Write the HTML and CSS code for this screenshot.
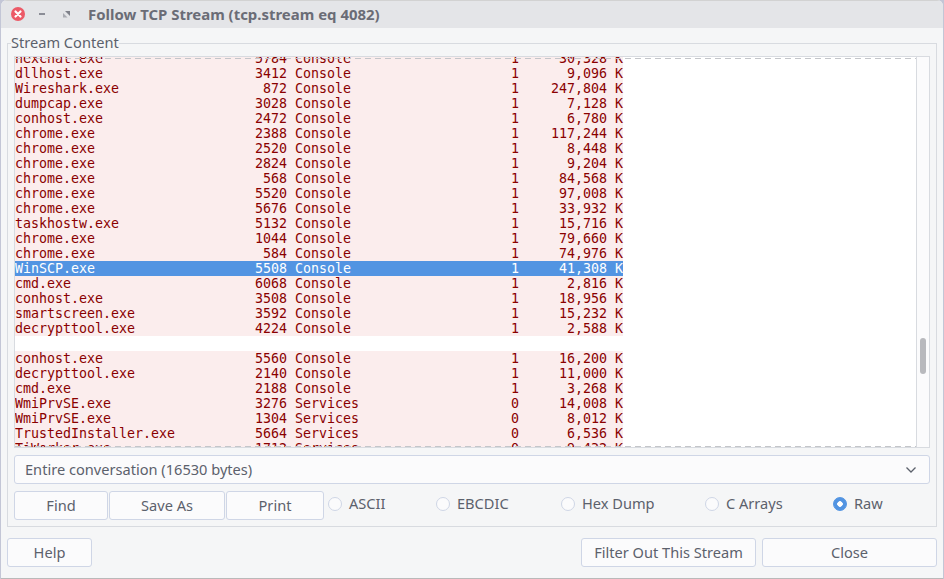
FILE: index.html
```html
<!DOCTYPE html>
<html lang="en">
<head>
<meta charset="utf-8">
<title>Follow TCP Stream</title>
<link rel="stylesheet" href="styles.css">
</head>
<body>
<div class="window">
  <header class="titlebar">
    <div class="controls">
      <svg class="ctl" width="16" height="16" viewBox="0 0 16 16"><circle cx="8" cy="8" r="7" fill="#ec5a67"/><path d="M5.500 5.500l5 5M10.500 5.500l-5 5" stroke="#fff" stroke-width="2.200" stroke-linecap="round"/></svg>
      <svg class="ctl" width="16" height="16" viewBox="0 0 16 16"><path d="M5 8h6" stroke="#8b8d96" stroke-width="2"/></svg>
      <svg class="ctl" width="16" height="16" viewBox="0 0 16 16"><path d="M7 5h5v5z" fill="#7f818a"/><path d="M5 7v4.500h4.500z" fill="#a9abb2"/></svg>
    </div>
    <h1 class="title">Follow TCP Stream (tcp.stream eq 4082)</h1>
  </header>
  <main class="content">
    <fieldset class="group">
      <legend class="legend">Stream Content</legend>
      <div class="stream">
        <div class="viewport">
          <div class="rows">
            <div class="row"><span>hexchat.exe</span><span>5784</span><span>Console</span><span>1</span><span>30,328 K</span></div>
            <div class="row"><span>dllhost.exe</span><span>3412</span><span>Console</span><span>1</span><span>9,096 K</span></div>
            <div class="row"><span>Wireshark.exe</span><span>872</span><span>Console</span><span>1</span><span>247,804 K</span></div>
            <div class="row"><span>dumpcap.exe</span><span>3028</span><span>Console</span><span>1</span><span>7,128 K</span></div>
            <div class="row"><span>conhost.exe</span><span>2472</span><span>Console</span><span>1</span><span>6,780 K</span></div>
            <div class="row"><span>chrome.exe</span><span>2388</span><span>Console</span><span>1</span><span>117,244 K</span></div>
            <div class="row"><span>chrome.exe</span><span>2520</span><span>Console</span><span>1</span><span>8,448 K</span></div>
            <div class="row"><span>chrome.exe</span><span>2824</span><span>Console</span><span>1</span><span>9,204 K</span></div>
            <div class="row"><span>chrome.exe</span><span>568</span><span>Console</span><span>1</span><span>84,568 K</span></div>
            <div class="row"><span>chrome.exe</span><span>5520</span><span>Console</span><span>1</span><span>97,008 K</span></div>
            <div class="row"><span>chrome.exe</span><span>5676</span><span>Console</span><span>1</span><span>33,932 K</span></div>
            <div class="row"><span>taskhostw.exe</span><span>5132</span><span>Console</span><span>1</span><span>15,716 K</span></div>
            <div class="row"><span>chrome.exe</span><span>1044</span><span>Console</span><span>1</span><span>79,660 K</span></div>
            <div class="row"><span>chrome.exe</span><span>584</span><span>Console</span><span>1</span><span>74,976 K</span></div>
            <div class="row selected"><span>WinSCP.exe</span><span>5508</span><span>Console</span><span>1</span><span>41,308 K</span></div>
            <div class="row"><span>cmd.exe</span><span>6068</span><span>Console</span><span>1</span><span>2,816 K</span></div>
            <div class="row"><span>conhost.exe</span><span>3508</span><span>Console</span><span>1</span><span>18,956 K</span></div>
            <div class="row"><span>smartscreen.exe</span><span>3592</span><span>Console</span><span>1</span><span>15,232 K</span></div>
            <div class="row"><span>decrypttool.exe</span><span>4224</span><span>Console</span><span>1</span><span>2,588 K</span></div>
            <div class="row blank"></div>
            <div class="row"><span>conhost.exe</span><span>5560</span><span>Console</span><span>1</span><span>16,200 K</span></div>
            <div class="row"><span>decrypttool.exe</span><span>2140</span><span>Console</span><span>1</span><span>11,000 K</span></div>
            <div class="row"><span>cmd.exe</span><span>2188</span><span>Console</span><span>1</span><span>3,268 K</span></div>
            <div class="row"><span>WmiPrvSE.exe</span><span>3276</span><span>Services</span><span>0</span><span>14,008 K</span></div>
            <div class="row"><span>WmiPrvSE.exe</span><span>1304</span><span>Services</span><span>0</span><span>8,012 K</span></div>
            <div class="row"><span>TrustedInstaller.exe</span><span>5664</span><span>Services</span><span>0</span><span>6,536 K</span></div>
            <div class="row"><span>TiWorker.exe</span><span>1712</span><span>Services</span><span>0</span><span>9,432 K</span></div>
          </div>
          <div class="edge edge-top"></div>
          <div class="edge edge-bottom"></div>
        </div>
        <div class="scrollbar"><div class="thumb"></div></div>
      </div>
      <div class="combo">
        <span class="combo-text">Entire conversation (16530 bytes)</span>
        <svg width="12" height="8" viewBox="0 0 12 8"><path d="M1.500 1.500L6 6l4.500-4.500" fill="none" stroke="#5c616c" stroke-width="1.300"/></svg>
      </div>
      <div class="actions">
        <button class="btn btn-find">Find</button>
        <button class="btn btn-save">Save As</button>
        <button class="btn btn-print">Print</button>
        <div class="radios">
          <label class="radio"><i class="dot"></i>ASCII</label>
          <label class="radio"><i class="dot"></i>EBCDIC</label>
          <label class="radio"><i class="dot"></i>Hex Dump</label>
          <label class="radio"><i class="dot"></i>C Arrays</label>
          <label class="radio"><i class="dot on"></i>Raw</label>
        </div>
      </div>
    </fieldset>
    <footer class="footer">
      <button class="btn btn-help">Help</button>
      <button class="btn btn-filter">Filter Out This Stream</button>
      <button class="btn btn-close">Close</button>
    </footer>
  </main>
</div>
</body>
</html>
```
FILE: styles.css
```css
* { box-sizing: border-box; }
html, body { margin: 0; height: 100%; background: #c3c6d6; }
body { font-family: "Noto Sans", "Open Sans", sans-serif; color: #5c616c; overflow: hidden; }
.window {
  width: 942px; height: 579px; margin-left: 1px; background: #f5f6f7;
  border-radius: 6px 6px 0 0; border-bottom: 1px solid #b9b9b9;
  display: flex; flex-direction: column; overflow: hidden;
}
.titlebar {
  height: 28px; flex: none; background: #e4e5e8; border-top: 1px solid #d2d2d2;
  display: flex; align-items: center; padding: 0 0 1px 9px;
}
.controls { display: flex; gap: 8px; }
.ctl { display: block; }
.title { margin: 0 0 0 14px; font-size: 14.95px; font-weight: 700; color: #6a6c76; white-space: nowrap; }
.content { flex: 1; display: flex; flex-direction: column; padding: 7px 6px 10px 6px; }
.group {
  margin: 0; padding: 0 6px 7px 6px; border: 1px solid #d8dbe0; height: 492px; min-width: 0;
  display: flex; flex-direction: column;
}
.legend { padding: 0 0 2px; margin-left: -3px; font-size: 14.6px; line-height: 14px; }
.stream {
  flex: none; height: 392px; margin-top: 5px; border: 1px solid #d8dbe0; background: #fff; display: flex;
}
.viewport { flex: 1; position: relative; overflow: hidden; }
.rows { margin-top: -6px; }
.row {
  width: 608px; height: 15px; display: grid;
  grid-template-columns: 208px 64px 144px 88px 104px;
  background: #fbeded; color: #8a0000;
  font: 13.3px/15px "DejaVu Sans Mono", monospace; white-space: pre;
}
.row span:nth-child(2), .row span:nth-child(4), .row span:nth-child(5) { text-align: right; }
.row span:nth-child(3) { padding-left: 8px; }
.blank { background: #fff; }
.selected { background: #5294e2; color: #fff; }
.edge {
  position: absolute; left: 0; right: 0; height: 1px;
  background: repeating-linear-gradient(90deg, #c4c6ca 0 6px, transparent 6px 10px);
}
.edge-top { top: 1px; }
.edge-bottom { bottom: 0; }
.scrollbar { width: 13px; flex: none; background: #fbfbfc; border-left: 1px solid #d8dbe0; position: relative; }
.thumb { position: absolute; top: 281px; left: 3px; width: 6px; height: 36px; border-radius: 3px; background: #b8b9bd; }
.combo {
  flex: none; height: 29px; margin-top: 7px; border: 1px solid #cfd6e6; border-radius: 3px; background: #fbfbfc;
  display: flex; align-items: center; justify-content: space-between; padding: 0 12px 0 10px; font-size: 14.6px;
}
.combo-text { padding-bottom: 2px; }
.actions { flex: none; display: flex; align-items: center; margin-top: 7px; height: 29px; gap: 1px; }
.btn {
  height: 29px; padding: 0 0 2px; border: 1px solid #cfd6e6; border-radius: 3px; background: #fbfbfc;
  font: 14.6px "Noto Sans", sans-serif; color: #5c616c;
}
.btn-find { width: 94px; }
.btn-save { width: 116px; }
.btn-print { width: 98px; }
.radios {
  flex: 1; display: grid; grid-template-columns: 108px 125px 144px 128px auto;
  margin-left: 3px; margin-top: -5px;
}
.radio { display: flex; align-items: center; gap: 7px; font-size: 14.6px; }
.dot { width: 14px; height: 14px; margin-top: 2px; border-radius: 50%; border: 1px solid #cfd6e6; background: #fbfbfc; }
.dot.on { background: radial-gradient(circle, #fff 0 2.500px, #5294e2 3px); border-color: #5294e2; }
.footer { display: flex; margin-top: 11px; gap: 6px; }
.btn-help { width: 85px; margin-right: auto; }
.btn-filter { width: 175px; }
.btn-close { width: 175px; }
```
